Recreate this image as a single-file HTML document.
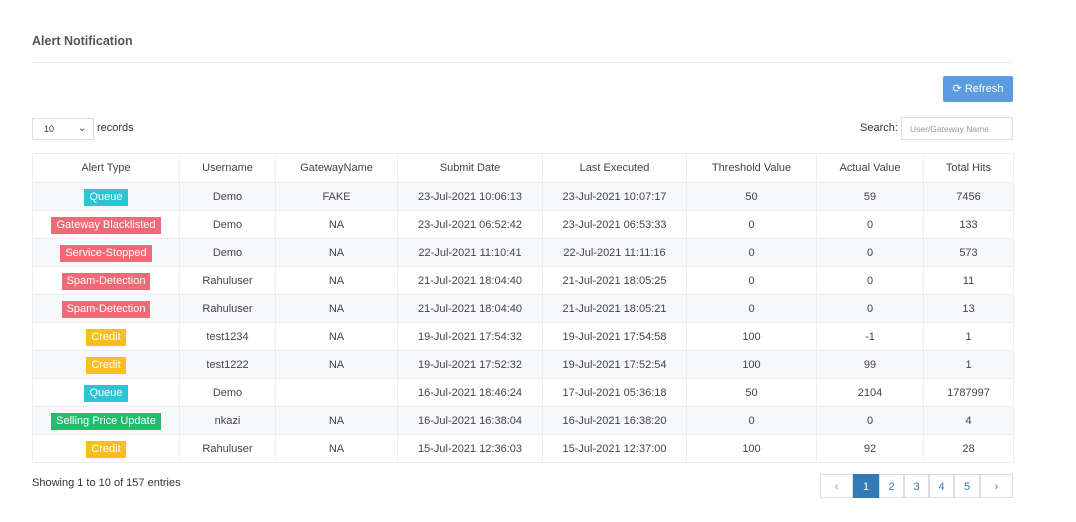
<!DOCTYPE html><html><head><style>
body{margin:0;background:#fff;font-family:"Liberation Sans",Arial,sans-serif;color:#333;width:1076px;height:522px;overflow:hidden;position:relative}
.abs{position:absolute}
h1{position:absolute;left:32px;top:34px;margin:0;font-size:12.5px;font-weight:bold;color:#555}
.hr{left:32px;top:62px;width:981px;height:1px;background:#eee}
.btn{left:943px;top:76px;width:70px;height:26px;background:#5b9be0;color:#fff;font-size:11px;line-height:26px;text-align:center;border-radius:2px}
.sel{left:32px;top:118px;width:60px;height:20px;border:1px solid #ddd;font-size:9px;line-height:20px}
table{position:absolute;left:32px;top:153px;border-collapse:collapse;font-size:11px;table-layout:fixed}
td,th{border:1px solid #eee;text-align:center;padding:0;height:27px;color:#444}
th{font-weight:normal;height:28px}
tbody tr:nth-child(odd){background:#f7f8fb}
.b{color:#fff;padding:2px 5px 3px;font-size:11px}
.q{background:#2ec4d4}.r{background:#ee6a74}.y{background:#f6c01a}.g{background:#27bb6c}
.pg{top:474px;height:24px;border:1px solid #ddd;font-size:11px;line-height:24px;text-align:center;color:#337ab7;box-sizing:border-box}
</style></head><body>
<h1>Alert Notification</h1>
<div class="abs hr"></div>
<div class="abs btn">&#10227; Refresh</div>
<div class="abs sel"><span style="margin-left:11px">10</span><span style="position:absolute;left:45px;top:0;font-size:10px">&#8964;</span></div>
<div class="abs" style="left:97px;top:122px;font-size:11px">records</div>
<div class="abs" style="left:860px;top:122px;font-size:11px">Search:</div>
<div class="abs" style="left:901px;top:117px;width:112px;height:23px;border:1px solid #ddd;font-size:8.5px;line-height:23px;color:#999;padding-left:8px;box-sizing:border-box">User/Gateway Name</div>
<table><colgroup><col style="width:147px"><col style="width:96px"><col style="width:122px"><col style="width:145px"><col style="width:144px"><col style="width:130px"><col style="width:107px"><col style="width:90px"></colgroup>
<thead><tr><th>Alert Type</th><th>Username</th><th>GatewayName</th><th>Submit Date</th><th>Last Executed</th><th>Threshold Value</th><th>Actual Value</th><th>Total Hits</th></tr></thead><tbody>
<tr><td><span class="b q">Queue</span></td><td>Demo</td><td>FAKE</td><td>23-Jul-2021 10:06:13</td><td>23-Jul-2021 10:07:17</td><td>50</td><td>59</td><td>7456</td></tr>
<tr><td><span class="b r">Gateway Blacklisted</span></td><td>Demo</td><td>NA</td><td>23-Jul-2021 06:52:42</td><td>23-Jul-2021 06:53:33</td><td>0</td><td>0</td><td>133</td></tr>
<tr><td><span class="b r">Service-Stopped</span></td><td>Demo</td><td>NA</td><td>22-Jul-2021 11:10:41</td><td>22-Jul-2021 11:11:16</td><td>0</td><td>0</td><td>573</td></tr>
<tr><td><span class="b r">Spam-Detection</span></td><td>Rahuluser</td><td>NA</td><td>21-Jul-2021 18:04:40</td><td>21-Jul-2021 18:05:25</td><td>0</td><td>0</td><td>11</td></tr>
<tr><td><span class="b r">Spam-Detection</span></td><td>Rahuluser</td><td>NA</td><td>21-Jul-2021 18:04:40</td><td>21-Jul-2021 18:05:21</td><td>0</td><td>0</td><td>13</td></tr>
<tr><td><span class="b y">Credit</span></td><td>test1234</td><td>NA</td><td>19-Jul-2021 17:54:32</td><td>19-Jul-2021 17:54:58</td><td>100</td><td>-1</td><td>1</td></tr>
<tr><td><span class="b y">Credit</span></td><td>test1222</td><td>NA</td><td>19-Jul-2021 17:52:32</td><td>19-Jul-2021 17:52:54</td><td>100</td><td>99</td><td>1</td></tr>
<tr><td><span class="b q">Queue</span></td><td>Demo</td><td></td><td>16-Jul-2021 18:46:24</td><td>17-Jul-2021 05:36:18</td><td>50</td><td>2104</td><td>1787997</td></tr>
<tr><td><span class="b g">Selling Price Update</span></td><td>nkazi</td><td>NA</td><td>16-Jul-2021 16:38:04</td><td>16-Jul-2021 16:38:20</td><td>0</td><td>0</td><td>4</td></tr>
<tr><td><span class="b y">Credit</span></td><td>Rahuluser</td><td>NA</td><td>15-Jul-2021 12:36:03</td><td>15-Jul-2021 12:37:00</td><td>100</td><td>92</td><td>28</td></tr>
</tbody></table>
<div class="abs" style="left:32px;top:477px;font-size:11px">Showing 1 to 10 of 157 entries</div>
<div class="abs pg" style="left:820px;width:33px;color:#999">&lsaquo;</div>
<div class="abs pg" style="left:853px;width:26px;background:#337ab7;color:#fff;border-color:#337ab7">1</div>
<div class="abs pg" style="left:879px;width:25px">2</div>
<div class="abs pg" style="left:904px;width:25px">3</div>
<div class="abs pg" style="left:929px;width:25px">4</div>
<div class="abs pg" style="left:954px;width:26px">5</div>
<div class="abs pg" style="left:980px;width:33px">&rsaquo;</div>
</body></html>
